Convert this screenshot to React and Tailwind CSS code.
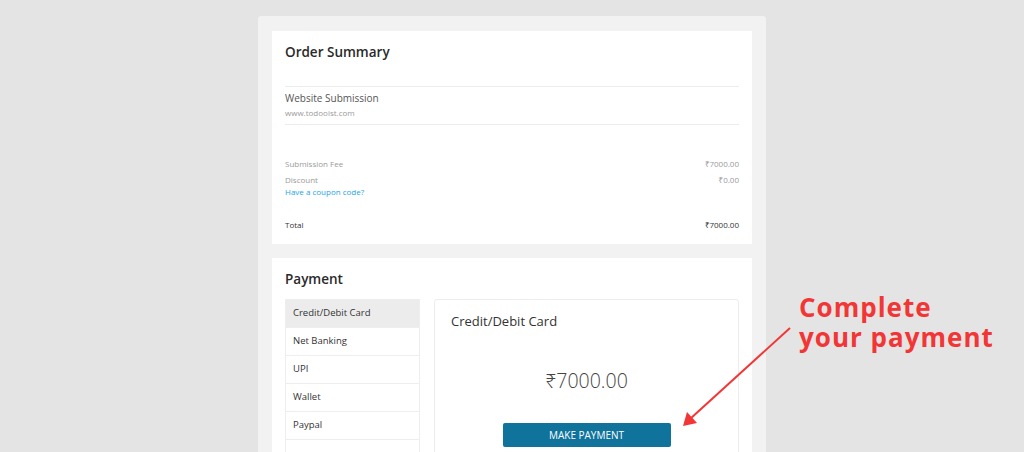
import React from "react";

const font = { fontFamily: '"Open Sans", "Noto Sans", sans-serif' };

function Row({ label, value, labelCls = "text-[#9a9a9a]", valueCls = "text-[#9a9a9a]" }) {
  return (
    <div className="flex justify-between text-[8px] leading-[12px]">
      <span className={labelCls}>{label}</span>
      <span className={valueCls}>{value}</span>
    </div>
  );
}

export default function App() {
  const methods = ["Credit/Debit Card", "Net Banking", "UPI", "Wallet", "Paypal", ""];
  return (
    <div className="relative h-[452px] w-[1024px] overflow-hidden bg-[#e4e4e4]" style={font}>
      <div className="mx-auto mt-[16px] w-[508px] rounded-t-[3px] bg-[#f2f2f2] px-[14px] pt-[15px] pb-[14px]">
        {/* Order Summary */}
        <div className="bg-white px-[13px] pt-[11px] pb-[13px]">
          <h2 className="text-[13.5px] font-semibold leading-[20px] text-[#2a2a2a]">Order Summary</h2>
          <div className="mt-[24px] border-t border-[#ececec] pt-[4px]">
            <div className="text-[10px] leading-[15px] text-[#555]">Website Submission</div>
            <div className="text-[8px] leading-[14px] text-[#9a9a9a]">www.todooist.com</div>
          </div>
          <div className="mt-[4px] border-t border-[#ececec] pt-[33px]">
            <Row label="Submission Fee" value="₹7000.00" />
            <div className="mt-[4px]">
              <Row label="Discount" value="₹0.00" />
            </div>
            <div className="text-[8px] leading-[12px] text-[#23a6e6]">Have a coupon code?</div>
            <div className="mt-[21px]">
              <Row label="Total" value="₹7000.00" labelCls="text-[#333]" valueCls="text-[#333]" />
            </div>
          </div>
        </div>

        {/* Payment */}
        <div className="mt-[14px] bg-white px-[13px] pt-[11px] pb-[20px]">
          <h2 className="text-[13.5px] font-semibold leading-[20px] text-[#2a2a2a]">Payment</h2>
          <div className="mt-[10px] flex gap-[14px]">
            <div className="flex w-[135px] flex-col">
              {methods.map((m, i) => (
                <div
                  key={i}
                  className={
                    "-mt-px flex h-[29px] items-center border border-[#eeeeee] px-[7px] text-[9.5px] text-[#333] first:mt-0 " +
                    (i === 0 ? "bg-[#ececec]" : "bg-white")
                  }
                >
                  {m}
                </div>
              ))}
            </div>
            <div className="flex h-[200px] flex-1 flex-col items-center rounded-[3px] border border-[#ececec] px-[16px] pt-[11px]">
              <div className="self-start text-[13px] leading-[20px] text-[#333]">Credit/Debit Card</div>
              <div className="mt-[35px] text-[19.5px] font-light leading-[30px] text-[#444]">₹7000.00</div>
              <button className="mt-[27px] h-[24px] w-[168px] rounded-[2px] bg-[#10739c] text-[10px] text-white">
                MAKE PAYMENT
              </button>
            </div>
          </div>
        </div>
      </div>

      {/* annotation */}
      <div
        className="absolute left-[799px] top-[292px] text-[26px] font-bold leading-[30px] text-[#f23636]"
        style={{ fontFamily: '"Open Sans", sans-serif', letterSpacing: "1px" }}
      >
        <div>Complete</div>
        <div>your payment</div>
      </div>
      <svg className="absolute left-0 top-0" width="1024" height="452" viewBox="0 0 1024 452">
        <line x1="790" y1="328" x2="690" y2="419" stroke="#f23636" strokeWidth="2" />
        <polygon points="683,426 687,412 697,423" fill="#f23636" />
      </svg>
    </div>
  );
}
